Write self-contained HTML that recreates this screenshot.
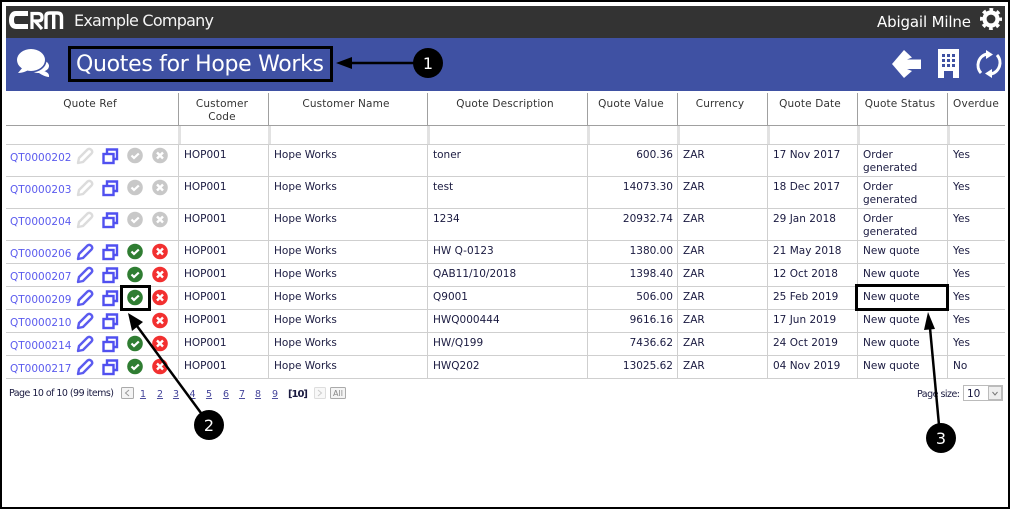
<!DOCTYPE html>
<html><head><meta charset="utf-8"><title>Quotes for Hope Works</title>
<style>
html,body{margin:0;padding:0;background:#fff;width:1010px;height:509px;overflow:hidden}
svg{display:block;position:absolute;left:0;top:0}
text{font-family:"DejaVu Sans","Liberation Sans",sans-serif;font-size:10.5px;fill:#1a1a40}
.h{text-anchor:middle;fill:#333;letter-spacing:.15px}
.l{fill:#5b5bee}
.r{text-anchor:end}
.p{font-size:9.5px}
.n{font-size:9.5px;fill:#44449a;text-decoration:underline;text-anchor:middle}
</style></head><body>
<svg width="1010" height="509" viewBox="0 0 1010 509" xmlns="http://www.w3.org/2000/svg">
<defs>
<g id="pen"><path d="M-7 7L-6 2L2.5-6.5Q4.5-8 6.5-6Q8-4 6.5-2.5L-2 6Z" fill="none" stroke="#5b5bf0" stroke-width="2.4" stroke-linejoin="round"/></g>
<g id="peng"><path d="M-7 7L-6 2L2.5-6.5Q4.5-8 6.5-6Q8-4 6.5-2.5L-2 6Z" fill="none" stroke="#dcdcdc" stroke-width="2.4" stroke-linejoin="round"/></g>
<g id="cp" fill="none" stroke="#5050f0" stroke-width="2.4"><rect x="-6.5" y="-2" width="10" height="9"/><path d="M-3-2V-6.5H7V3H3.500"/></g>
<g id="ok"><circle r="7.8" fill="#2f7d32"/><path d="M-3.5 0L-1 2.5L3.8-2" fill="none" stroke="#fff" stroke-width="2.2"/></g>
<g id="no"><circle r="7.8" fill="#f23030"/><path d="M-3-3L3 3M3-3L-3 3" stroke="#fff" stroke-width="2.4"/></g>
<g id="okg"><circle r="7.8" fill="#c8c8c8"/><path d="M-3.5 0L-1 2.5L3.8-2" fill="none" stroke="#fff" stroke-width="2.2"/></g>
<g id="nog"><circle r="7.8" fill="#c8c8c8"/><path d="M-3-3L3 3M3-3L-3 3" stroke="#fff" stroke-width="2.4"/></g>
</defs>

<!-- frame -->
<rect x="0" y="0" width="1010" height="2" fill="#000"/>
<rect x="0" y="507" width="1010" height="2" fill="#000"/>
<rect x="0" y="0" width="2" height="509" fill="#000"/>
<rect x="1008" y="0" width="2" height="509" fill="#000"/>

<!-- top bar -->
<rect x="6" y="6" width="999" height="32" fill="#333"/>
<g fill="none" stroke="#fff" stroke-linecap="butt">
<path d="M28 13.5H16Q11.5 13.5 11.5 20Q11.5 26.5 16 26.5H28" stroke-width="5"/>
<path d="M32 29V13.5H38Q42 13.5 42 17.5Q42 21 38 21H35L42 29" stroke-width="3.2"/>
<path d="M46 29V16Q46 13 50 13H57Q61.5 13 61.5 17V29M53.7 14V29" stroke-width="3.4"/>
</g>
<text x="74" y="26" style="font-size:16px;fill:#f4f4f4" textLength="140">Example Company</text>
<text x="877" y="27" style="font-size:15px;fill:#fff" textLength="94">Abigail Milne</text>
<g transform="translate(991 19)" fill="none" stroke="#fff">
<circle r="6.5" stroke-width="4.2"/>
<circle r="9.3" stroke-width="3.4" stroke-dasharray="3.65 3.65" stroke-dashoffset="1.8"/>
</g>

<!-- blue bar -->
<rect x="6" y="38" width="999" height="53" fill="#3f51a3"/>
<path d="M37 70C43 70 50 72 49 77C46 77 42 75 39 73C32 73 28 69 30 66Z" fill="#fff"/>
<ellipse cx="40" cy="66" rx="9" ry="6" fill="#fff"/>
<ellipse cx="31" cy="60.5" rx="15.5" ry="12" fill="#3f51a3"/>
<ellipse cx="31" cy="60" rx="14" ry="11" fill="#fff"/>
<path d="M23 67L18 73C23 73 27 71 30 69Z" fill="#fff"/>

<rect x="69.500" y="47.500" width="262" height="33" fill="none" stroke="#000" stroke-width="3"/>
<text x="76" y="71" style="font-size:22px;fill:#fff" textLength="248">Quotes for Hope Works</text>

<polygon points="892,64 904,50 912,57.500 907,59.500 921,59.500 921,69 907,69 912,71 904,78" fill="#fff"/>
<rect x="938" y="49" width="21" height="29" fill="#fff"/>
<g fill="#3f51a3">
<rect x="942" y="54" width="3" height="3"/><rect x="947" y="54" width="3" height="3"/><rect x="952" y="54" width="3" height="3"/>
<rect x="942" y="59" width="3" height="3"/><rect x="947" y="59" width="3" height="3"/><rect x="952" y="59" width="3" height="3"/>
<rect x="942" y="64" width="3" height="3"/><rect x="947" y="64" width="3" height="3"/><rect x="952" y="64" width="3" height="3"/>
<rect x="944" y="71" width="9" height="7"/>
</g>
<g fill="none" stroke="#fff" stroke-width="3">
<path d="M981 73A11.500 11.500 0 0 1 987 54"/>
<path d="M997 55A11.500 11.500 0 0 1 991 74"/>
</g>
<polygon points="986,50 986,59 993,54.500" fill="#fff"/>
<polygon points="992,69 992,78 985,73.500" fill="#fff"/>

<!-- table header -->
<g class="hd">
<text class="h" x="90" y="107">Quote Ref</text>
<text class="h" x="222" y="107">Customer</text>
<text class="h" x="222" y="120">Code</text>
<text class="h" x="346" y="107">Customer Name</text>
<text class="h" x="505" y="107">Quote Description</text>
<text class="h" x="631" y="107">Quote Value</text>
<text class="h" x="720" y="107">Currency</text>
<text class="h" x="810" y="107">Quote Date</text>
<text class="h" x="900" y="107">Quote Status</text>
<text class="h" x="976" y="107">Overdue</text>
</g>
<g fill="#a0a0a0">
<rect x="178" y="93" width="1" height="33"/><rect x="268" y="93" width="1" height="33"/><rect x="427" y="93" width="1" height="33"/><rect x="587" y="93" width="1" height="33"/><rect x="677" y="93" width="1" height="33"/><rect x="767" y="93" width="1" height="33"/><rect x="857" y="93" width="1" height="33"/><rect x="947" y="93" width="1" height="33"/>
<rect x="6" y="125" width="999" height="1"/>
</g>
<g fill="#e2e2e2">
<rect x="178" y="126" width="3" height="18"/><rect x="268" y="126" width="3" height="18"/><rect x="427" y="126" width="3" height="18"/><rect x="587" y="126" width="3" height="18"/><rect x="677" y="126" width="3" height="18"/><rect x="767" y="126" width="3" height="18"/><rect x="857" y="126" width="3" height="18"/><rect x="947" y="126" width="3" height="18"/>
</g>
<!-- row lines -->
<g fill="#cfcfcf">
<rect x="6" y="144" width="999" height="1"/><rect x="6" y="176" width="999" height="1"/><rect x="6" y="208" width="999" height="1"/><rect x="6" y="240" width="999" height="1"/><rect x="6" y="263" width="999" height="1"/><rect x="6" y="286" width="999" height="1"/><rect x="6" y="309" width="999" height="1"/><rect x="6" y="332" width="999" height="1"/><rect x="6" y="355" width="999" height="1"/><rect x="6" y="378" width="999" height="1"/>
<rect x="178" y="144" width="1" height="234"/><rect x="268" y="144" width="1" height="234"/><rect x="427" y="144" width="1" height="234"/><rect x="587" y="144" width="1" height="234"/><rect x="677" y="144" width="1" height="234"/><rect x="767" y="144" width="1" height="234"/><rect x="857" y="144" width="1" height="234"/><rect x="947" y="144" width="1" height="234"/>
</g>

<!-- row 1 -->
<text class="l" x="10" y="161">QT0000202</text>
<use href="#peng" x="85" y="156"/><use href="#cp" x="110" y="156"/><use href="#okg" x="135" y="155.500"/><use href="#nog" x="160" y="155.500"/>
<text x="184" y="158">HOP001</text><text x="274" y="158">Hope Works</text><text x="433" y="158">toner</text><text class="r" x="673" y="158">600.36</text><text x="683" y="158">ZAR</text><text x="773" y="158">17 Nov 2017</text><text x="863" y="158">Order</text><text x="863" y="171">generated</text><text x="953" y="158">Yes</text>
<!-- row 2 -->
<text class="l" x="10" y="193">QT0000203</text>
<use href="#peng" x="85" y="188"/><use href="#cp" x="110" y="188"/><use href="#okg" x="135" y="187.500"/><use href="#nog" x="160" y="187.500"/>
<text x="184" y="190">HOP001</text><text x="274" y="190">Hope Works</text><text x="433" y="190">test</text><text class="r" x="673" y="190">14073.30</text><text x="683" y="190">ZAR</text><text x="773" y="190">18 Dec 2017</text><text x="863" y="190">Order</text><text x="863" y="203">generated</text><text x="953" y="190">Yes</text>
<!-- row 3 -->
<text class="l" x="10" y="225">QT0000204</text>
<use href="#peng" x="85" y="220"/><use href="#cp" x="110" y="220"/><use href="#okg" x="135" y="219.500"/><use href="#nog" x="160" y="219.500"/>
<text x="184" y="222">HOP001</text><text x="274" y="222">Hope Works</text><text x="433" y="222">1234</text><text class="r" x="673" y="222">20932.74</text><text x="683" y="222">ZAR</text><text x="773" y="222">29 Jan 2018</text><text x="863" y="222">Order</text><text x="863" y="235">generated</text><text x="953" y="222">Yes</text>
<!-- row 4 -->
<text class="l" x="10" y="257">QT0000206</text>
<use href="#pen" x="85" y="252"/><use href="#cp" x="110" y="252"/><use href="#ok" x="135" y="251.500"/><use href="#no" x="160" y="251.500"/>
<text x="184" y="254">HOP001</text><text x="274" y="254">Hope Works</text><text x="433" y="254">HW Q-0123</text><text class="r" x="673" y="254">1380.00</text><text x="683" y="254">ZAR</text><text x="773" y="254">21 May 2018</text><text x="863" y="254">New quote</text><text x="953" y="254">Yes</text>
<!-- row 5 -->
<text class="l" x="10" y="280">QT0000207</text>
<use href="#pen" x="85" y="275"/><use href="#cp" x="110" y="275"/><use href="#ok" x="135" y="274.500"/><use href="#no" x="160" y="274.500"/>
<text x="184" y="277">HOP001</text><text x="274" y="277">Hope Works</text><text x="433" y="277">QAB11/10/2018</text><text class="r" x="673" y="277">1398.40</text><text x="683" y="277">ZAR</text><text x="773" y="277">12 Oct 2018</text><text x="863" y="277">New quote</text><text x="953" y="277">Yes</text>
<!-- row 6 -->
<text class="l" x="10" y="303">QT0000209</text>
<use href="#pen" x="85" y="298"/><use href="#cp" x="110" y="298"/><use href="#ok" x="135" y="297.500"/><use href="#no" x="160" y="297.500"/>
<text x="184" y="300">HOP001</text><text x="274" y="300">Hope Works</text><text x="433" y="300">Q9001</text><text class="r" x="673" y="300">506.00</text><text x="683" y="300">ZAR</text><text x="773" y="300">25 Feb 2019</text><text x="863" y="300">New quote</text><text x="953" y="300">Yes</text>
<!-- row 7 -->
<text class="l" x="10" y="326">QT0000210</text>
<use href="#pen" x="85" y="321"/><use href="#cp" x="110" y="321"/><use href="#no" x="160" y="320.500"/>
<text x="184" y="323">HOP001</text><text x="274" y="323">Hope Works</text><text x="433" y="323">HWQ000444</text><text class="r" x="673" y="323">9616.16</text><text x="683" y="323">ZAR</text><text x="773" y="323">17 Jun 2019</text><text x="863" y="323">New quote</text><text x="953" y="323">Yes</text>
<!-- row 8 -->
<text class="l" x="10" y="349">QT0000214</text>
<use href="#pen" x="85" y="344"/><use href="#cp" x="110" y="344"/><use href="#ok" x="135" y="343.500"/><use href="#no" x="160" y="343.500"/>
<text x="184" y="346">HOP001</text><text x="274" y="346">Hope Works</text><text x="433" y="346">HW/Q199</text><text class="r" x="673" y="346">7436.62</text><text x="683" y="346">ZAR</text><text x="773" y="346">24 Oct 2019</text><text x="863" y="346">New quote</text><text x="953" y="346">Yes</text>
<!-- row 9 -->
<text class="l" x="10" y="372">QT0000217</text>
<use href="#pen" x="85" y="367"/><use href="#cp" x="110" y="367"/><use href="#ok" x="135" y="366.500"/><use href="#no" x="160" y="366.500"/>
<text x="184" y="369">HOP001</text><text x="274" y="369">Hope Works</text><text x="433" y="369">HWQ202</text><text class="r" x="673" y="369">13025.62</text><text x="683" y="369">ZAR</text><text x="773" y="369">04 Nov 2019</text><text x="863" y="369">New quote</text><text x="953" y="369">No</text>

<!-- pager -->
<text class="p" x="9" y="396" textLength="105">Page 10 of 10 (99 items)</text>
<rect x="121.500" y="387.500" width="12" height="11" rx="1" fill="#f4f4f4" stroke="#aaa"/>
<path d="M129 390L125.500 393L129 396" fill="none" stroke="#999"/>
<text class="n" x="143" y="397">1</text><text class="n" x="160" y="397">2</text><text class="n" x="176" y="397">3</text><text class="n" x="192.500" y="397">4</text><text class="n" x="209" y="397">5</text><text class="n" x="226" y="397">6</text><text class="n" x="242" y="397">7</text><text class="n" x="258" y="397">8</text><text class="n" x="275" y="397">9</text>
<text x="288" y="397" style="font-size:10px;font-weight:bold" textLength="20">[10]</text>
<rect x="314.500" y="387.500" width="11" height="11" rx="1" fill="#f8f8f8" stroke="#ddd"/>
<path d="M318 390L321.500 393L318 396" fill="none" stroke="#ccc"/>
<rect x="330.500" y="387.500" width="15" height="11" rx="1" fill="#f4f4f4" stroke="#aaa"/>
<text x="333" y="396" style="font-size:8px;fill:#888">All</text>

<text class="p" x="917" y="397" textLength="43">Page size:</text>
<rect x="963.500" y="385.500" width="39" height="15" fill="#fff" stroke="#bbb"/>
<text x="967" y="397">10</text>
<rect x="988.500" y="386.500" width="13" height="13" fill="#eee" stroke="#bbb"/>
<path d="M992.500 392L995 395L997.500 392" fill="none" stroke="#777"/>

<!-- annotations -->
<rect x="121.500" y="286.500" width="28" height="23" fill="none" stroke="#000" stroke-width="3"/>
<rect x="856.500" y="285.500" width="91" height="24" fill="none" stroke="#000" stroke-width="3"/>

<path d="M352 63H414" stroke="#000" stroke-width="2.500"/>
<polygon points="336,63 352,57 352,69" fill="#000"/>
<circle cx="428" cy="63" r="15" fill="#000"/>
<text x="428" y="69" text-anchor="middle" style="font-size:16px;fill:#fff">1</text>

<path d="M137 326L201 413" stroke="#000" stroke-width="2.500"/>
<polygon points="128,313 143,322 132,331" fill="#000"/>
<circle cx="209" cy="425" r="15" fill="#000"/>
<text x="209" y="431" text-anchor="middle" style="font-size:16px;fill:#fff">2</text>

<path d="M930 328L939 425" stroke="#000" stroke-width="2.500"/>
<polygon points="928,312 935,329 924,330" fill="#000"/>
<circle cx="941" cy="438" r="15" fill="#000"/>
<text x="941" y="444" text-anchor="middle" style="font-size:16px;fill:#fff">3</text>
</svg>
</body></html>
